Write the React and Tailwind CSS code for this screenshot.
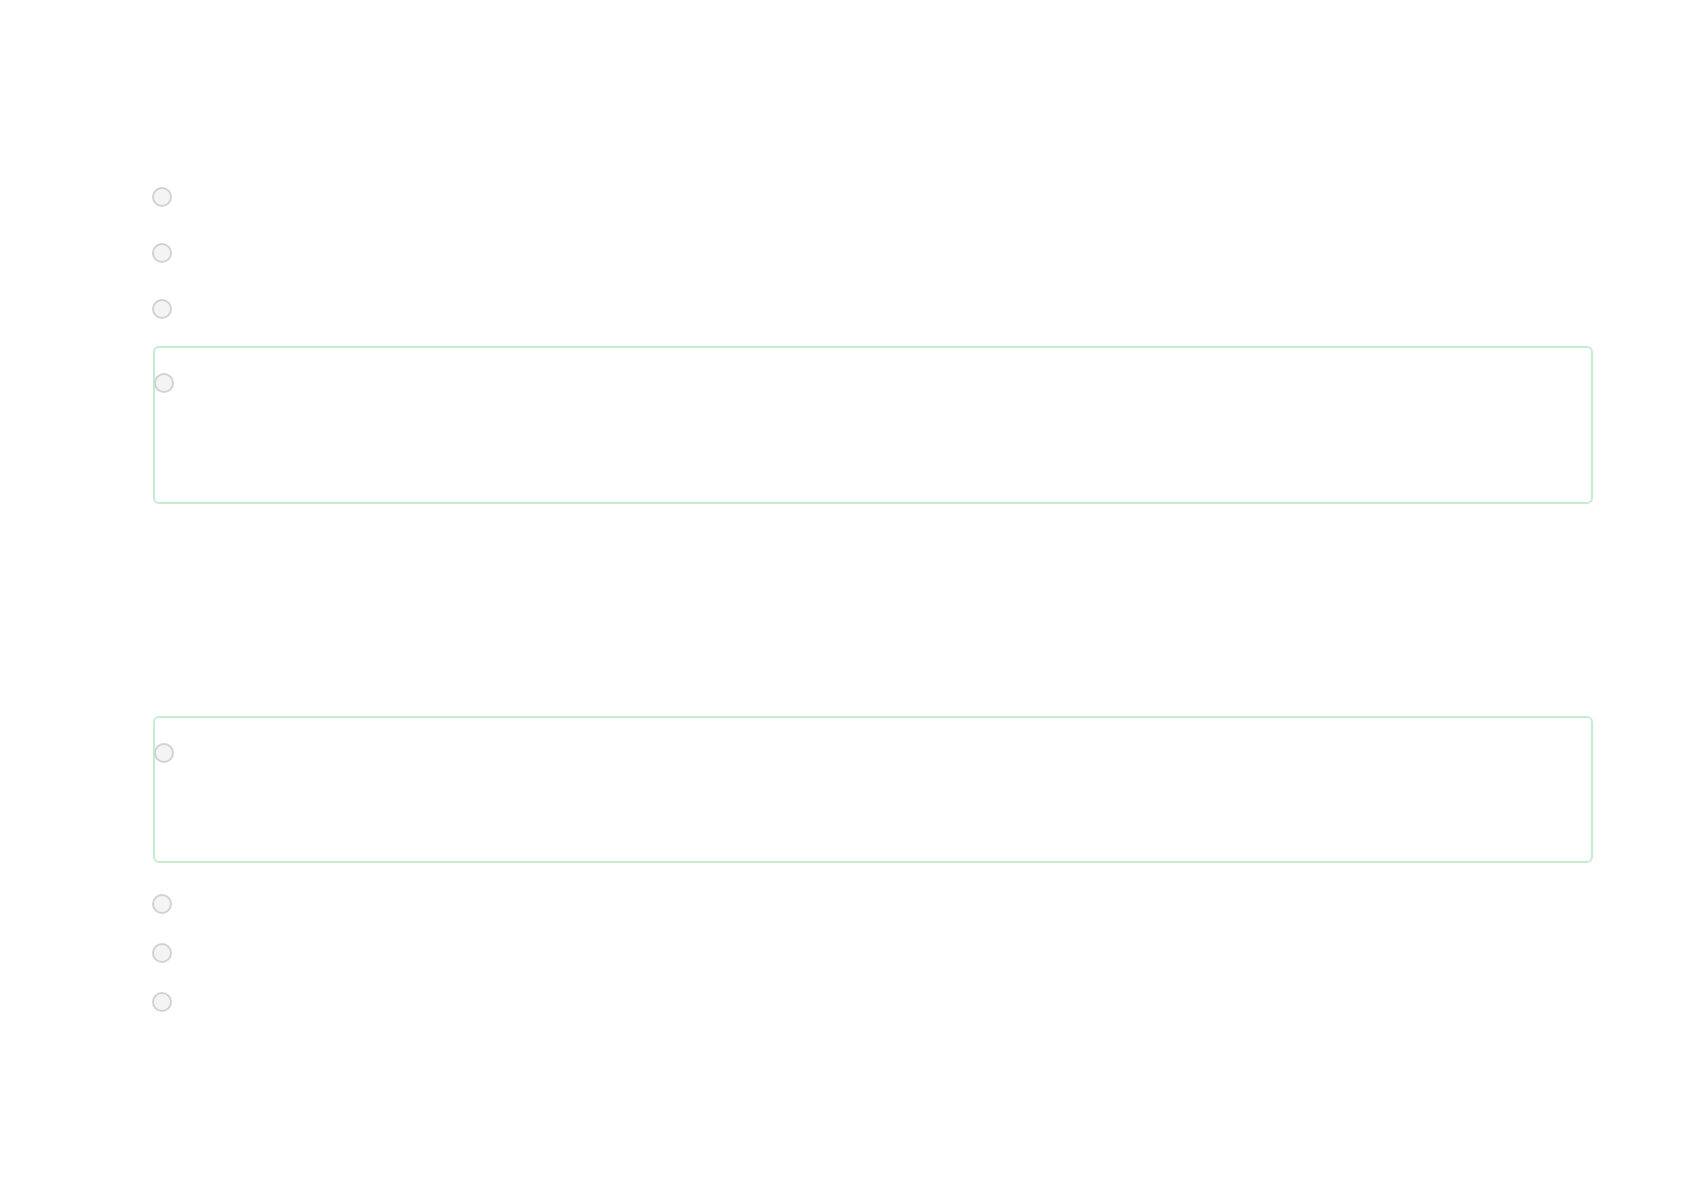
import React from "react";

function Radio({ className = "" }) {
  return (
    <div
      className={
        "w-[20px] h-[20px] rounded-full border-2 border-[#d2d2d2] bg-[#f4f4f4] shrink-0 " +
        className
      }
    />
  );
}

export default function App() {
  return (
    <div className="min-h-[1190px] w-full bg-white" style={{ fontFamily: "'Liberation Sans', Arial, sans-serif" }}>
      <div className="ml-[152px] w-[1441px] pt-[187px] flex flex-col">
        <div className="h-[56px]">
          <Radio />
        </div>
        <div className="h-[56px]">
          <Radio />
        </div>
        <div className="h-[47px]">
          <Radio />
        </div>
        <div className="h-[158px] border-2 border-[#c6ecd0] rounded-[6px] pt-[25px] ml-[1px]">
          <Radio className="-ml-[1px]" />
        </div>
        <div className="h-[147px] mt-[212px] border-2 border-[#c6ecd0] rounded-[6px] pt-[25px] ml-[1px]">
          <Radio className="-ml-[1px]" />
        </div>
        <div className="mt-[31px] flex flex-col gap-[29px]">
          <Radio />
          <Radio />
          <Radio />
        </div>
      </div>
    </div>
  );
}
